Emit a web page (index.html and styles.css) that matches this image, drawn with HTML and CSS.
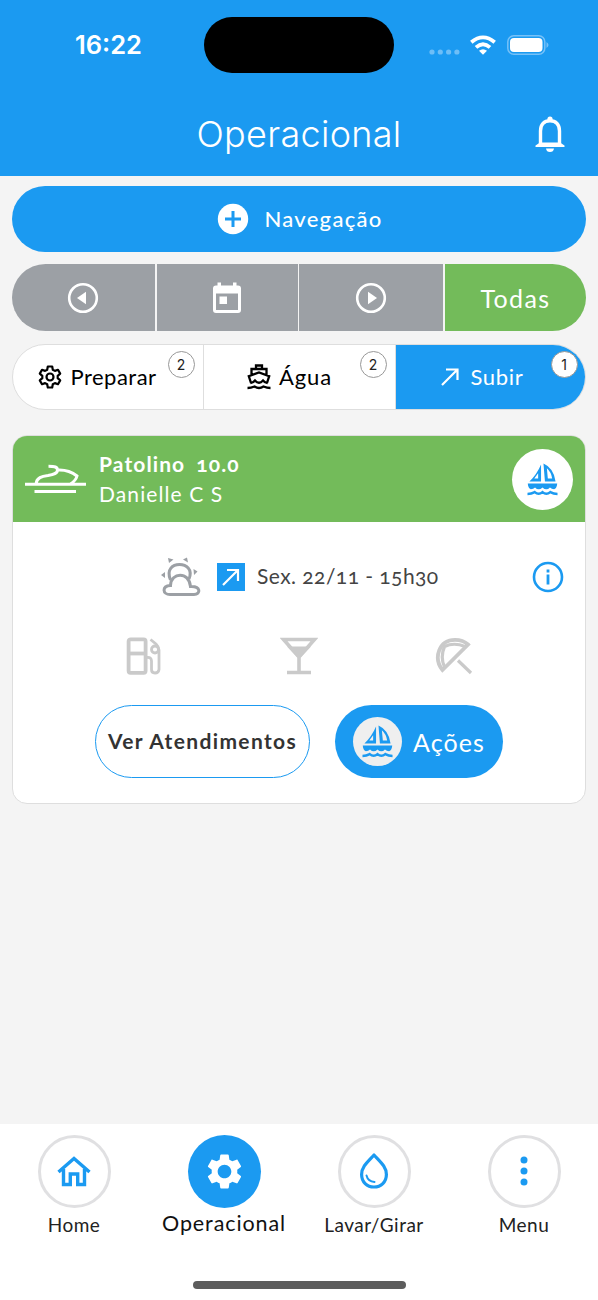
FILE: index.html
```html
<!DOCTYPE html>
<html lang="pt-BR">
<head>
<meta charset="utf-8">
<title>Operacional</title>
<link rel="stylesheet" href="styles.css">
</head>
<body>
<svg class="defs" aria-hidden="true">
  <symbol id="gear" viewBox="0 0 24 24"><path d="M19.43 12.98c.04-.32.07-.64.07-.98s-.03-.66-.07-.98l2.11-1.65c.19-.15.24-.42.12-.64l-2-3.46c-.12-.22-.39-.3-.61-.22l-2.49 1c-.52-.4-1.08-.73-1.69-.98l-.38-2.65C14.46 2.18 14.25 2 14 2h-4c-.25 0-.46.18-.49.42l-.38 2.65c-.61.25-1.17.59-1.69.98l-2.49-1c-.23-.09-.49 0-.61.22l-2 3.46c-.13.22-.07.49.12.64l2.11 1.65c-.04.32-.07.65-.07.98s.03.66.07.98l-2.11 1.65c-.19.15-.24.42-.12.64l2 3.46c.12.22.39.3.61.22l2.49-1c.52.4 1.08.73 1.69.98l.38 2.65c.03.24.24.42.49.42h4c.25 0 .46-.18.49-.42l.38-2.65c.61-.25 1.17-.59 1.69-.98l2.49 1c.23.09.49 0 .61-.22l2-3.46c.12-.22.07-.49-.12-.64l-2.11-1.65zM12 16c-2.2 0-4-1.8-4-4s1.8-4 4-4 4 1.8 4 4-1.8 4-4 4z"/></symbol>
  <symbol id="sail" viewBox="0 0 32 34">
    <path fill="currentColor" fill-rule="evenodd" d="M14.5 1.5V19H2.5Q10 12 14.500 1.500zM11.500 10.500V16H7.500zM17 .5Q27.500 5 29.500 19H18.500zM20.500 5.500L21.500 16H26Q25 9.500 20.500 5.500z"/>
    <path fill="currentColor" d="M.8 21H31.200C31 24 30 26 28 27Q25.500 27 23.700 25.200Q20 29 16 25.200Q12 29 8.300 25.200Q6.500 27 4 27C2 26 1 24 .8 21z"/>
    <path fill="none" stroke="currentColor" stroke-width="2.500" d="M.5 32Q4.500 32 8 30Q12 33.500 16 30Q20 33.500 24 30Q27.500 32 31.500 32"/>
  </symbol>
</svg>

<header class="top">
  <div class="status">
    <span class="clock">16:22</span>
    <span class="island"></span>
    <div class="signals">
      <svg width="31" height="6" viewBox="0 0 31 6" fill="#6ebef7"><circle cx="3" cy="3" r="2.600"/><circle cx="11.300" cy="3" r="2.600"/><circle cx="19.600" cy="3" r="2.600"/><circle cx="27.900" cy="3" r="2.600"/></svg>
      <svg class="wifi" width="26" height="20" viewBox="0 0 26 20" fill="none" stroke="#fff" stroke-width="3.800"><path d="M1.300 7.300Q13-2.500 24.700 7.300M6 12.300Q13 6 20 12.300"/><path fill="#fff" stroke="none" d="M9 15.800Q13 12.600 17 15.800L13 19.800z"/></svg>
      <svg class="battery" width="43" height="20" viewBox="0 0 43 20"><rect x=".8" y=".8" width="37" height="18.400" rx="6" fill="none" stroke="#76c1f8" stroke-width="1.500"/><rect x="3" y="3" width="32.500" height="14" rx="4" fill="#fff"/><path d="M39.500 7Q43.500 10 39.500 13z" fill="#76c1f8"/></svg>
    </div>
  </div>
  <div class="title-bar">
    <h1>Operacional</h1>
    <svg class="bell" width="30" height="37" viewBox="0 0 30 37"><path fill="none" stroke="#fff" stroke-width="3.400" d="M5.500 28V15C5.500 8.500 9 4.800 15 4.800S24.500 8.500 24.500 15V28"/><circle cx="15" cy="3" r="2.600" fill="#fff"/><path fill="#fff" d="M5 26.500H25L29.500 29.500V31H.5V29.500zM11 32.500H19Q18.500 36 15 36T11 32.500z"/></svg>
  </div>
</header>

<main class="content">
  <button class="new-trip">
    <svg width="32" height="32" viewBox="0 0 32 32"><circle cx="16" cy="16" r="15.200" fill="#fff"/><path stroke="#1b9af1" stroke-width="3" d="M8 16H24M16 8V24"/></svg>
    <span>Navegação</span>
  </button>

  <div class="dates">
    <button><svg width="32" height="32" viewBox="0 0 32 32"><circle cx="16" cy="16" r="13.800" fill="none" stroke="#fff" stroke-width="2.600"/><path fill="#fff" d="M10 16L19 9.700V22.300z"/></svg></button>
    <button><svg width="28" height="32" viewBox="0 0 28 32"><path fill="#fff" fill-rule="evenodd" d="M4.500.5H8V3.500H20V.5H23.500V3.500H25Q28 3.500 28 6.500V28Q28 31 25 31H3Q0 31 0 28V6.500Q0 3.500 3 3.500H4.500zM3 11.500V28H25V11.500zM6.500 14.500H14V22H6.500z"/></svg></button>
    <button><svg width="32" height="32" viewBox="0 0 32 32"><circle cx="16" cy="16" r="13.800" fill="none" stroke="#fff" stroke-width="2.600"/><path fill="#fff" d="M22 16L13 9.700V22.300z"/></svg></button>
    <button class="all"><span>Todas</span></button>
  </div>

  <div class="stages">
    <button class="stage">
      <svg width="24" height="24" viewBox="0 0 24 24" fill="none" stroke="#000" stroke-width="2.200" stroke-linejoin="round"><path d="M9.800 1.500H14.200L14.800 4.700L16.900 5.900L20 4.800L22.200 8.600L19.700 10.800V13.200L22.200 15.400L20 19.200L16.900 18.100L14.800 19.300L14.200 22.500H9.800L9.200 19.300L7.100 18.100L4 19.200L1.800 15.400L4.300 13.200V10.800L1.800 8.600L4 4.800L7.100 5.900L9.200 4.700z"/><circle cx="12" cy="12" r="3.500"/></svg>
      <span class="w-preparar">Preparar</span><b class="badge">2</b>
    </button>
    <button class="stage">
      <svg width="24" height="26" viewBox="0 0 24 26" fill="none" stroke="#000" stroke-width="2.300"><path d="M9 5V1.500H15V5M4.500 11V5H19.500V11M4 19L1.800 12.200L12 8.500L22.200 12.200L20 19M3.500 19Q6 19 8 16.500Q12 21 16 16.500Q18 19 20.500 19M.5 24Q4 24 7.500 22.500Q12 25.500 16.500 22.500Q20 24 23.500 24"/></svg>
      <span class="w-agua">Água</span><b class="badge">2</b>
    </button>
    <button class="stage active">
      <svg width="18" height="18" viewBox="0 0 18 18" fill="none" stroke="#fff" stroke-width="2.200"><path d="M1 17L16.500 1.500M5 1.500H16.500V12"/></svg>
      <span class="w-subir">Subir</span><b class="badge">1</b>
    </button>
  </div>

  <article class="card">
    <div class="card-head">
      <svg width="62" height="30" viewBox="0 0 62 30" fill="none" stroke="#fff" stroke-width="3"><path d="M0 20.300H61M9.500 27.500H51M11 20C11.500 13.500 17 12.200 23 11.500C29 10.500 32.500 9.500 32.500 6C32.500 3 30 2.200 23.500 2.200M32.500 6C41 5.500 47 8 52 12C51 16 48.500 18 45.500 20"/></svg>
      <div class="who"><strong><span class="w-boat">Patolino</span> <span class="w-num">10.0</span></strong><span class="owner">Danielle C S</span></div>
      <span class="sail-badge"><svg width="31" height="35"><use href="#sail"/></svg></span>
    </div>
    <div class="when">
      <svg width="40" height="40" viewBox="0 0 40 40"><path fill="#fff" stroke="#9ca0a5" stroke-width="3" d="M9.500 23C5 12 12 7.500 18.500 7.500S32 12 28 22"/><path fill="#fff" stroke="#9ca0a5" stroke-width="3" d="M9 37.500C1.500 37.500 .5 29 9.500 28.500C10 15 28 14 29.500 29.500C40 29 40 37.500 33 37.500z"/><path fill="#9ca0a5" d="M7 1L12.500 2.500L8 6zM22 2.500L26 .5L27 5.500zM32.500 12L36.500 14.500L33 18zM0 18L4 15V21z"/></svg>
      <span class="up"><svg width="20" height="20" viewBox="0 0 20 20" fill="none" stroke="#fff" stroke-width="2.200"><path d="M2 18L17 3M6 3H17V14"/></svg></span>
      <span class="date">Sex. 22/11 - 15h30</span>
      <svg class="info" width="32" height="32" viewBox="0 0 32 32"><circle cx="16" cy="16" r="14" fill="none" stroke="#1b9af1" stroke-width="2.600"/><path fill="#1b9af1" d="M14.600 8.500H17.400V11.500H14.600zM14.600 13.500H17.400V23.500H14.600z"/></svg>
    </div>
    <div class="services">
      <svg width="36" height="38" viewBox="0 0 36 38" fill="none" stroke="#cacaca" stroke-width="3.800"><rect x="2.600" y="2.300" width="17" height="33.500" rx="2"/><path d="M2 16.500H20"/><path stroke-width="2.800" d="M21 20.500Q25.500 20 25.500 24V32.500Q25.500 36 29 36T33 32.500V13Q33 10 30 7L24.500 2.500"/><circle cx="29" cy="12.500" r="3.500" stroke-width="2.800"/></svg>
      <svg width="38" height="38" viewBox="0 0 38 38"><path fill="none" stroke="#cacaca" stroke-width="3.600" d="M7 35.500H31M19 21V35.500M3.500 2.500H34.500L19 20z"/><path fill="#cacaca" d="M7 9.500H31L19 22z"/></svg>
      <svg width="38" height="38" viewBox="0 0 38 38" fill="none" stroke="#cacaca" stroke-width="3.200"><path stroke-width="3.800" d="M7.500 33C-2 21 4 2.800 20 2.800Q28 2.800 33 7.500z"/><path d="M9.500 30Q5 20 9.500 9.500Q19 5 30 9.500M23 23.500L36 36"/></svg>
    </div>
    <div class="actions">
      <button class="see"><span>Ver Atendimentos</span></button>
      <button class="act"><i class="disc"><svg width="31" height="35"><use href="#sail"/></svg></i><span>Ações</span></button>
    </div>
  </article>
</main>

<nav class="tabs">
  <a class="tab"><i class="ring"><svg width="34" height="31" viewBox="0 0 34 31" fill="none" stroke="#1b9af1" stroke-width="3.400"><path d="M1.500 16L17 2.500L32.500 16M6.500 13V28.500H13.300V18H20.700V28.500H27.500V13"/></svg></i><span class="w-home">Home</span></a>
  <a class="tab on"><i class="ring"><svg width="41" height="41" fill="#fff"><use href="#gear"/></svg></i><span class="w-oper">Operacional</span></a>
  <a class="tab"><i class="ring"><svg width="28" height="36" viewBox="0 0 28 36" fill="none" stroke="#1b9af1" stroke-width="3.200" stroke-linejoin="round"><path d="M14 2C7 9.500 1.600 14 1.600 21.500C1.600 29 7 34 14 34S26.400 29 26.400 21.500C26.400 14 21 9.500 14 2z"/><path stroke-width="2" stroke-linecap="round" d="M6.500 22.500Q8 28.500 14.500 29"/></svg></i><span class="w-lavar">Lavar/Girar</span></a>
  <a class="tab"><i class="ring"><svg width="8" height="30" viewBox="0 0 8 30" fill="#1b9af1"><circle cx="4" cy="4" r="3.500"/><circle cx="4" cy="15" r="3.500"/><circle cx="4" cy="26" r="3.500"/></svg></i><span class="w-menu">Menu</span></a>
  <span class="home-bar"></span>
</nav>
</body>
</html>
```
FILE: styles.css
```css
* { box-sizing: border-box; }
body { margin: 0; width: 598px; height: 1300px; background: #f4f4f4; font-family: Lato, "Open Sans", sans-serif; color: #000; display: flex; flex-direction: column; overflow: hidden; }
svg { display: block; flex: none; }
.defs { position: absolute; width: 0; height: 0; }
button { font: inherit; color: inherit; border: 0; margin: 0; padding: 0; background: none; display: flex; align-items: center; justify-content: center; }
span { white-space: nowrap; }

.top { height: 175.500px; background: #1b9af1; color: #fff; font-family: Inter, sans-serif; }
.status { height: 90px; display: grid; grid-template-columns: 204px 190px 204px; }
.clock { font-size: 25.500px; font-weight: 600; line-height: 90px; padding-left: 75px; }
.island { height: 56px; margin-top: 17px; border-radius: 28px; background: #000; }
.signals { display: flex; padding: 34.500px 0 0 35px; }
.signals svg:first-child { margin-top: 14px; }
.wifi { margin-left: 10px; }
.battery { margin-left: 10.500px; }
.title-bar { display: grid; grid-template-columns: 1fr auto 1fr; align-items: center; height: 86px; padding: 0 33px; }
h1 { grid-column: 2; margin: 0; font-size: 36px; font-weight: 350; line-height: 88px; letter-spacing: .3px; }
.bell { justify-self: end; }

.content { flex: 1; padding: 10.500px 12px 0; }
.new-trip { width: 100%; height: 65.500px; border-radius: 33px; background: #1b9af1; color: #fff; gap: 15px; font-size: 22px; font-weight: 500; }
.new-trip span { letter-spacing: 1.300px; margin-right: -2px; }

.dates { display: grid; grid-template-columns: 143px 141px 144px 142px; gap: 1.500px; margin-top: 12.500px; height: 67px; border-radius: 34px; overflow: hidden; background: #f4f4f4; }
.dates button { background: #9ca0a5; }
.dates button:first-child { padding-right: 2px; }
.dates .all { background: #73bb5a; color: #fff; font-size: 25px; letter-spacing: 1.400px; }

.stages { display: grid; grid-template-columns: 190px 192px 1fr; margin-top: 12.500px; height: 66px; border: 1px solid #dedede; border-radius: 33px; background: #fff; }
.stage { position: relative; font-size: 22px; gap: 8px; }
.stage + .stage { border-left: 1px solid #dedede; }
.stage.active { background: #1b9af1; color: #fff; border-radius: 0 32px 32px 0; gap: 11px; padding-right: 16px; letter-spacing: .7px; }
.stage:first-child { padding-right: 21px; letter-spacing: .5px; }
.stage:nth-child(2) { padding-right: 20px; letter-spacing: .9px; }
.badge { position: absolute; top: 6.500px; right: 8.500px; width: 27px; height: 27px; border: 1.500px solid #989898; border-radius: 50%; background: #fff; color: #222; font: 400 14px/25px Inter, sans-serif; letter-spacing: 0; text-align: center; }
.stage.active .badge { right: 7.500px; }

.card { margin-top: 25.500px; height: 368.500px; border: 1px solid #dedede; border-radius: 15px; background: #fff; overflow: hidden; }
.card-head { height: 86px; background: #73bb5a; color: #fff; display: flex; align-items: center; padding: 0 12px; gap: 12px; }
.who { flex: 1; font-size: 21px; line-height: 30px; display: flex; flex-direction: column; }
.who strong { font-weight: 700; display: flex; gap: 11px; letter-spacing: 1.100px; font-variant-numeric: oldstyle-nums; }
.owner { font-weight: 400; letter-spacing: 1.100px; }
.sail-badge { width: 61px; height: 61px; border-radius: 50%; background: #fff; color: #1b9af1; display: grid; place-items: center; }
.when { display: flex; align-items: center; height: 40px; margin-top: 35px; padding: 0 21px 0 148px; }
.up { width: 28px; height: 28px; background: #1b9af1; margin: 0 12px 0 16px; display: grid; place-items: center; }
.date { font-size: 21px; line-height: 26px; margin-top: -2px; letter-spacing: .45px; color: #444; font-variant-numeric: oldstyle-nums; }
.info { margin-left: auto; }
.services { display: grid; grid-template-columns: repeat(3, 155px); justify-content: center; justify-items: center; margin-top: 40px; height: 38px; }
.actions { display: flex; justify-content: center; gap: 25px; margin-top: 30px; height: 73px; }
.see { width: 215px; border: 1.500px solid #1b9af1; border-radius: 37px; font-size: 21px; font-weight: 700; color: #333; letter-spacing: 1.350px; padding-bottom: 2px; }
.act { width: 168px; border-radius: 37px; background: #1b9af1; color: #fff; font-size: 25px; gap: 11px; letter-spacing: 1.100px; }
.disc { width: 49px; height: 49px; border-radius: 50%; background: #efefef; color: #1b9af1; display: grid; place-items: center; }

.tabs { position: relative; height: 176px; background: #fff; display: grid; grid-template-columns: repeat(4, 150px); margin-left: -1px; padding-top: 10.500px; width: 600px; }
.tab { display: flex; flex-direction: column; align-items: center; font-size: 19px; line-height: 34px; color: #222; letter-spacing: .5px; }
.ring { width: 73px; height: 73px; border: 3px solid #e0e0e2; border-radius: 50%; display: grid; place-items: center; }
.on .ring { background: #1b9af1; border: 0; }
.on { font-size: 21.500px; line-height: 30px; color: #111; letter-spacing: .9px; }
.home-bar { position: absolute; left: 194px; top: 157px; width: 213px; height: 8px; border-radius: 4px; background: #5d5d5d; }
```
